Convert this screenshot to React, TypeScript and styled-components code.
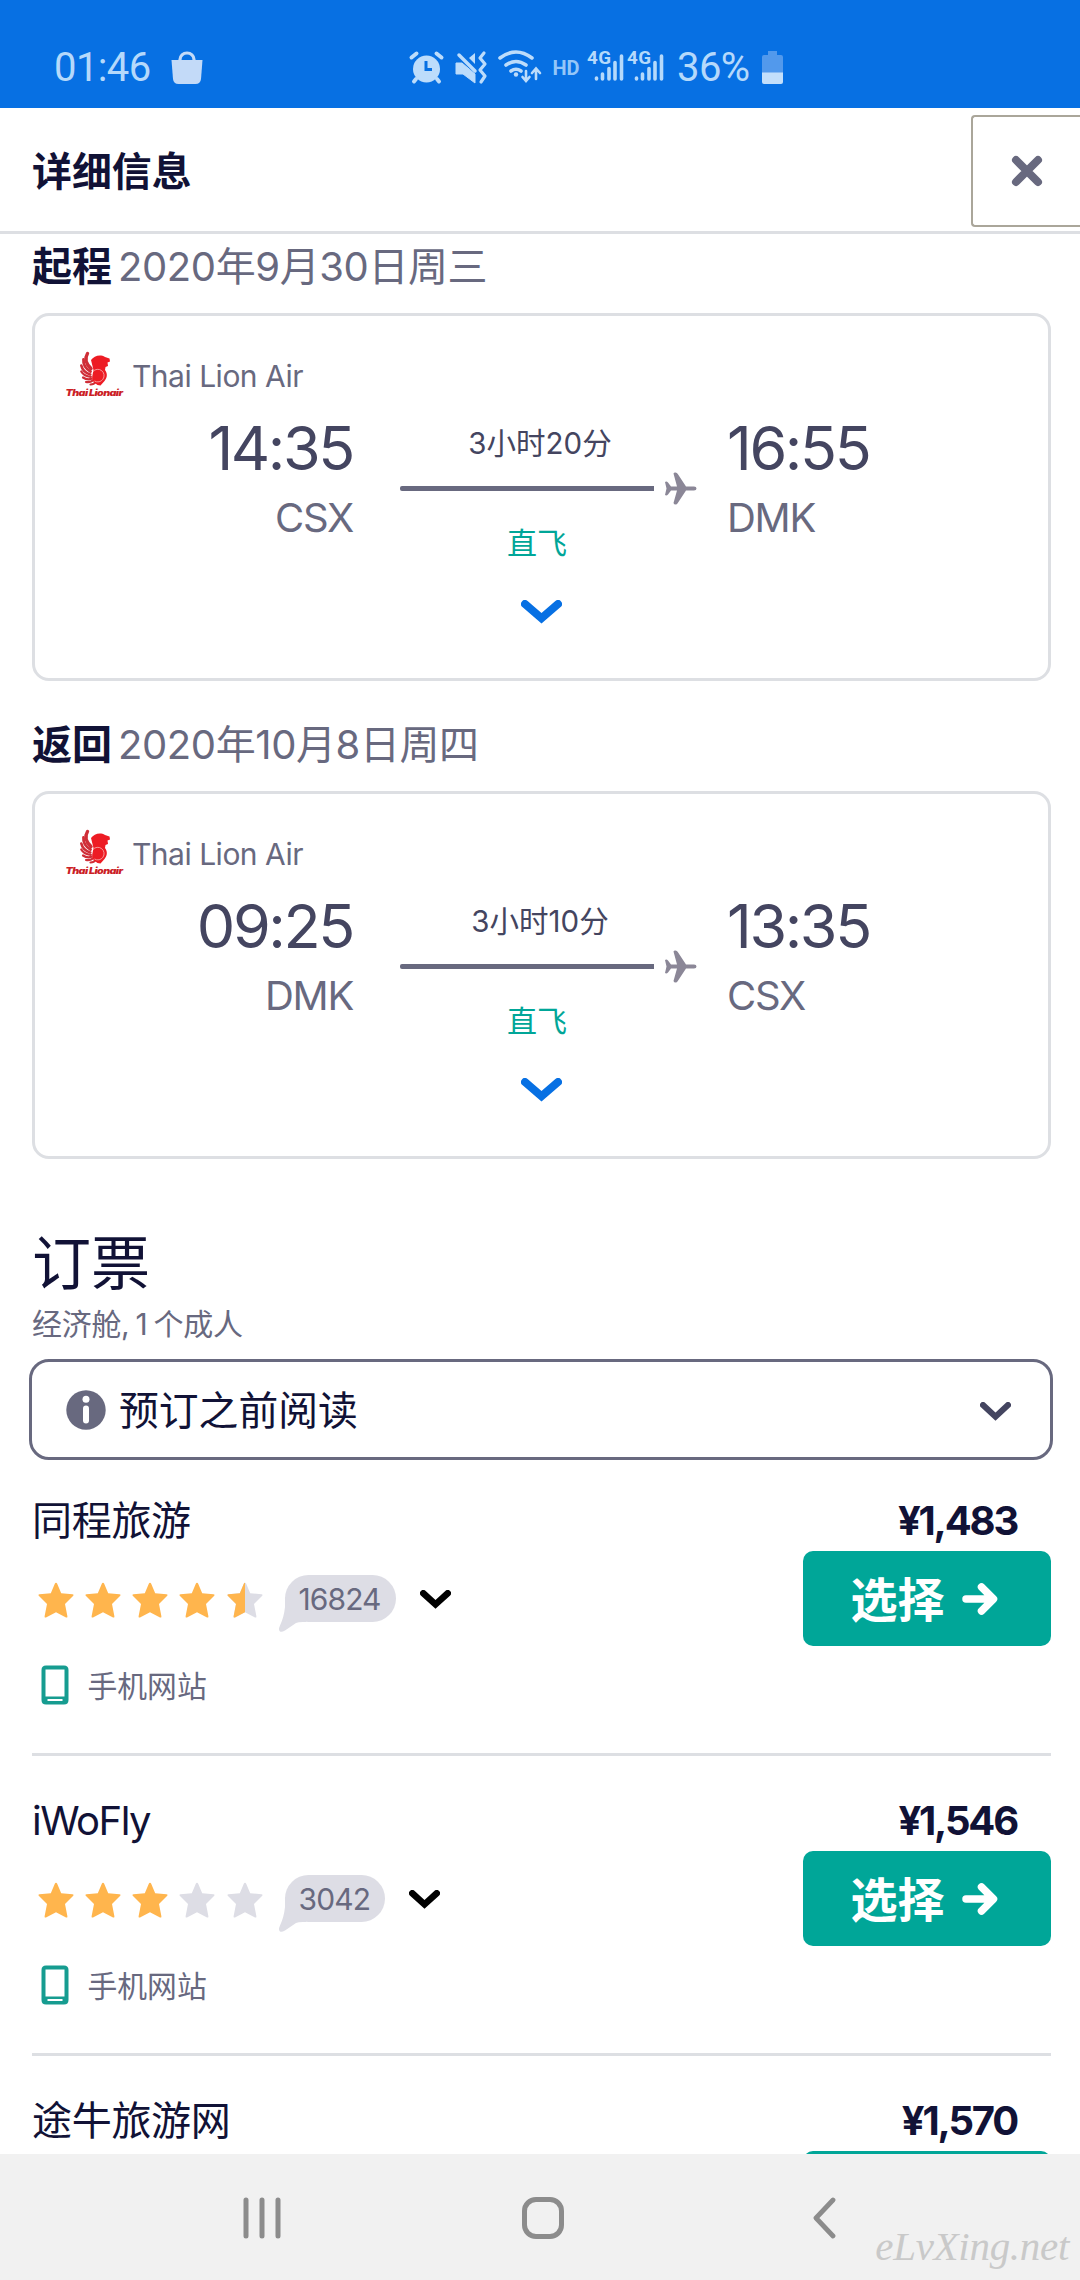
import React from "react";
import styled, { createGlobalStyle } from "styled-components";

const color = {
  blue: "#0770e3",
  ink: "#111236",
  time: "#444560",
  grey: "#68697f",
  line: "#dddfe3",
  teal: "#00a698",
  star: "#ffb54d",
  pale: "#dddde5",
  status: "#b5d9fb",
};

const GlobalStyle = createGlobalStyle`
  * { box-sizing: border-box; }
  body {
    margin: 0;
    background: #fff;
    font-family: Inter, "Noto Sans CJK SC", sans-serif;
    color: ${color.ink};
  }
  svg { display: block; flex: none; }
  button { font: inherit; color: inherit; margin: 0; padding: 0; border: 0; background: none; }
`;

const Screen = styled.div`
  width: 1080px;
  height: 2280px;
  display: flex;
  flex-direction: column;
  overflow: hidden;
  background: #fff;
`;

/* Status bar */
const StatusBar = styled.div`
  flex: none;
  height: 108px;
  padding: 27px 297px 0 54px;
  display: flex;
  align-items: center;
  justify-content: space-between;
  background: ${color.blue};
  color: ${color.status};
  font-family: Roboto, sans-serif;
`;
const StatusGroup = styled.div`
  display: flex;
  align-items: center;
`;
const SignalPair = styled.div`
  display: flex;
  margin: 0 10px 0 -15px;
`;
const StatusText = styled.span<{ $width: number }>`
  width: ${(p) => p.$width}px;
  font-size: 40px;
  line-height: 48px;
  letter-spacing: -0.6px;
  white-space: nowrap;
`;

/* Header */
const Header = styled.header`
  flex: none;
  height: 126px;
  padding-left: 32px;
  display: flex;
  justify-content: space-between;
  align-items: center;
  border-bottom: 3px solid ${color.line};
`;
const Title = styled.h1`
  margin: 4px 0 0;
  font-size: 39.900px;
  line-height: 50px;
  font-weight: 700;
`;
const CloseButton = styled.button`
  width: 109px;
  height: 112px;
  margin-top: 2px;
  padding-left: 38px;
  border: 2px solid #aaa69a;
  border-right: 0;
  border-radius: 4px 0 0 4px;
`;

/* Content */
const Content = styled.main`
  flex: none;
  height: 1920px;
  padding: 0 29px 0 32px;
  overflow: hidden;
`;
const LegHeading = styled.h2<{ $top?: number }>`
  margin: ${(p) => p.$top ?? 0}px 0 17px;
  height: 62px;
  padding-bottom: 3px;
  display: flex;
  align-items: center;
  gap: 6px;
  font-size: 40px;
  font-weight: 700;
  white-space: nowrap;
`;
const LegDate = styled.span`
  font-weight: 380;
  letter-spacing: -0.4px;
  color: ${color.grey};
`;
const Card = styled.section`
  height: 368px;
  padding: 29px 30px 0;
  border: 3px solid ${color.line};
  border-radius: 17px;
  display: flex;
  flex-direction: column;
`;
const Airline = styled.div`
  height: 60px;
  display: flex;
  align-items: center;
  gap: 7px;
  font-size: 30px;
  font-weight: 380;
  letter-spacing: -0.5px;
  color: ${color.grey};
`;
const AirlineName = styled.span`
  padding-top: 2px;
`;
const LegGrid = styled.div`
  display: grid;
  grid-template-columns: 287px 297px 1fr;
  column-gap: 48px;
  height: 195px;
`;
const Stop = styled.div<{ $end?: boolean }>`
  padding-top: 7px;
  margin: ${(p) => (p.$end ? "0 0 0 -18px" : "0 -1px 0 0")};
  text-align: ${(p) => (p.$end ? "left" : "right")};
`;
const Time = styled.div`
  height: 72px;
  font-size: 61px;
  line-height: 72px;
  letter-spacing: -2.4px;
  color: ${color.time};
`;
const Airport = styled.div`
  margin-top: 9px;
  font-size: 40px;
  line-height: 50px;
  font-weight: 400;
  letter-spacing: -1.3px;
  color: ${color.grey};
`;
const Route = styled.div`
  padding-top: 18px;
`;
const Duration = styled.div`
  width: 280px;
  font-size: 29.5px;
  line-height: 40px;
  text-align: center;
  color: ${color.time};
`;
const Track = styled.div`
  height: 33px;
  margin-top: 9px;
  display: flex;
  align-items: center;
  gap: 11px;
`;
const TrackLine = styled.div`
  width: 255px;
  height: 5px;
  border-radius: 2px 0 0 2px;
  background: ${color.grey};
`;
const Direct = styled.div`
  width: 274px;
  margin-top: 18px;
  font-size: 30px;
  line-height: 40px;
  text-align: center;
  color: ${color.teal};
`;
const Expand = styled.button`
  align-self: center;
`;

const BookTitle = styled.h2`
  margin: 65px 0 0;
  font-size: 59px;
  line-height: 80px;
  font-weight: 400;
`;
const BookSub = styled.p`
  margin: 0 0 15px;
  font-size: 30px;
  line-height: 40px;
  letter-spacing: -0.3px;
  word-spacing: -2px;
  font-weight: 380;
  color: ${color.grey};
`;
const Notice = styled.button`
  width: 1024px;
  height: 101px;
  margin: 0 -3px -4px;
  padding: 0 39px 0 34px;
  border: 3px solid ${color.grey};
  border-radius: 20px;
  display: flex;
  align-items: center;
`;
const NoticeText = styled.span`
  flex: 1;
  padding: 2px 0 0 13px;
  text-align: left;
  font-size: 39.800px;
  line-height: 56px;
`;
const NoticeToggle = styled.span`
  padding-top: 4px;
`;

/* Agents */
const Agent = styled.article`
  height: 300px;
  padding-top: 40px;
  border-bottom: 3px solid ${color.line};
  display: flex;
  justify-content: space-between;
`;
const AgentName = styled.h3<{ $latin?: boolean }>`
  margin: 0;
  padding-top: 1px;
  font-size: 40px;
  line-height: 48px;
  font-weight: 400;
  letter-spacing: ${(p) => (p.$latin ? -1.5 : -0.3)}px;
`;
const Rating = styled.div`
  height: 60px;
  margin-top: 23px;
  padding-left: 5.500px;
  display: flex;
  align-items: center;
`;
const Stars = styled.div`
  display: flex;
  gap: 11.250px;
  padding-top: 3px;
`;
const Bubble = styled.div`
  position: relative;
  height: 47px;
  margin: 0 24px 0 22px;
  padding: 0 15px 0 14px;
  border-radius: 24px;
  background: ${color.pale};
  font-size: 30px;
  line-height: 48px;
  letter-spacing: -0.9px;
  color: ${color.grey};
`;
const BubbleTail = styled.svg`
  position: absolute;
  left: -6px;
  top: 22px;
`;
const ReviewCount = styled.span`
  position: relative;
`;
const RatingToggle = styled.span`
  padding-top: 3px;
`;
const Site = styled.div`
  height: 48px;
  margin-top: 32px;
  padding-left: 9px;
  display: flex;
  align-items: center;
  gap: 18.500px;
  font-size: 29.800px;
  font-weight: 380;
  color: ${color.grey};
`;
const SiteIcon = styled.span`
  padding-top: 2px;
`;
const Offer = styled.div`
  width: 248px;
`;
const Price = styled.div`
  padding-right: 34px;
  font-size: 40px;
  line-height: 49px;
  font-weight: 700;
  letter-spacing: -2.200px;
  text-align: right;
`;
const Select = styled.button`
  width: 248px;
  height: 95px;
  margin-top: 6px;
  padding-right: 6px;
  border-radius: 10px;
  display: flex;
  justify-content: center;
  align-items: center;
  gap: 17px;
  background: ${color.teal};
  color: #fff;
  font-size: 47px;
  font-weight: 700;
`;
const SelectLabel = styled.span`
  padding-bottom: 4px;
`;

/* Navigation bar */
const NavBar = styled.nav`
  position: relative;
  flex: 1;
  padding: 2px 0 0 243px;
  display: flex;
  align-items: center;
  background: #f1f1f1;
`;
const NavButton = styled.button<{ $gap?: number }>`
  margin-left: ${(p) => p.$gap ?? 0}px;
`;
const Watermark = styled.span`
  position: absolute;
  right: 11px;
  bottom: 11px;
  font-family: "Liberation Serif", serif;
  font-style: italic;
  font-size: 41px;
  line-height: 46px;
  letter-spacing: -0.3px;
  color: #c9c9c9;
`;

const Chevron = ({ w, h, stroke, sw }: { w: number; h: number; stroke: string; sw: number }) => (
  <svg width={w} height={h} viewBox={`0 0 ${w} ${h}`} fill="none">
    <path
      d={`M${sw / 2} ${sw / 2} L${w / 2} ${h - sw * 0.72} L${w - sw / 2} ${sw / 2}`}
      stroke={stroke}
      strokeWidth={sw}
      strokeLinecap="round"
    />
  </svg>
);

const BagIcon = () => (
  <svg width="32" height="34" viewBox="0 0 32 34">
    <path d="M9 10V8.500a7 6.500 0 0 1 14 0V10" fill="none" stroke="#c3daf8" strokeWidth="3.200" />
    <path d="M.5 9h31L30 28q-.6 5-5.500 5h-17Q2.600 33 2 28Z" fill="#c3daf8" />
  </svg>
);

const StatusIcons = () => (
  <svg width="194" height="36" viewBox="408 48 194 36" fill="none" stroke="#bcdcfb">
    <g>
      <circle cx="426.500" cy="67" r="13.500" fill="#bcdcfb" stroke="none" />
      <path d="M411.500 55.500l5-4M441.500 55.500l-5-4" strokeWidth="4" strokeLinecap="round" />
      <path d="M416 77l-2 2.500M437 77l2 2.500" strokeWidth="4" strokeLinecap="round" />
      <path d="M426 59v8.500h6" stroke={color.blue} strokeWidth="3" />
    </g>
    <g>
      <path d="M456 61h6l13 11v9l-12-9h-7Z" fill="#bcdcfb" stroke="#bcdcfb" strokeWidth="1" />
      <path d="M459 53l16 16" strokeWidth="3.500" strokeLinecap="round" />
      <path d="M469 56l6-5v11Z" fill="#bcdcfb" stroke="none" />
      <path d="M484 51l-4 5 5 6-5 6 5 6-4 6" strokeWidth="3.200" strokeLinecap="round" strokeLinejoin="round" />
    </g>
    <g strokeWidth="3.600" strokeLinecap="round">
      <path d="M500 56q16-12 32 0M506 63q10-7 20 0M511 69q5-3.500 10 0" />
      <circle cx="516" cy="72.500" r="2.200" fill="#bcdcfb" stroke="none" />
      <path d="M526 69v9M522.500 75l3.500 4 3.500-4M536 77v-10M532 71l4-4.500 4 4.500" strokeWidth="2.600" />
    </g>
    <text x="552.500" y="72.500" fontFamily="Roboto" fontSize="20" fontWeight="700" fill="#94c6f8" stroke="none" textLength="27">HD</text>
  </svg>
);

const Signal = () => (
  <svg width="40" height="52" viewBox="0 -8 40 52">
    <text x="0" y="14.200" fontFamily="Roboto" fontSize="18.800" fontWeight="700" fill={color.status} textLength="24">4G</text>
    <g stroke={color.status} strokeWidth="3.600" strokeLinecap="round">
      <path d="M9.500 28v1M15.500 24v5M22 18.500v10.500M28 12.500v16.500M34.500 6v23" />
    </g>
  </svg>
);

const BatteryIcon = () => (
  <svg width="21" height="33" viewBox="0 0 21 33">
    <path d="M6 0h9v4h4q2 0 2 2v16H0V6q0-2 2-2h4Z" fill="#5299ec" />
    <path d="M0 21.500h21V31q0 2-2 2H2q-2 0-2-2Z" fill="#c3dffb" />
  </svg>
);

const CloseIcon = () => (
  <svg width="32" height="32" viewBox="0 0 32 32">
    <path d="M5 5l22 22M27 5L5 27" stroke={color.grey} strokeWidth="8" strokeLinecap="round" />
  </svg>
);

const LionLogo = () => (
  <svg width="60" height="48" viewBox="0 0 60 48">
    <g fill="none" stroke="#cf2e37" strokeLinecap="round">
      <path d="M22.500 2.500c-3 5-2 10 3.500 15" strokeWidth="3.400" />
      <path d="M18.500 8.500c-.5 5 2 9 7 12" strokeWidth="2.800" />
      <path d="M16.300 14.500c1 4.500 4 7.500 9 9" strokeWidth="2.600" />
      <path d="M16.300 20.500c2 3.500 5 5 9.500 5.300" strokeWidth="2.300" />
      <path d="M18 26.500c3 2 5.500 2.300 8.500 1.300" strokeWidth="2.200" />
      <path d="M21 31c3 .6 5 0 7-1.600" strokeWidth="2.200" />
      <path d="M25.500 33.500c2.500 0 4-.8 5-2.500" strokeWidth="2.200" />
    </g>
    <path d="M26 9c3-4 9-6 14-3l4.500 1.500.5 3-2.500 1 .5 3.500-2.500 1-.5 3c3 4 2 8-.5 11l-4 4.500-3-.5c-5-3-6-6-5-10l1-5Z" fill="#ed1c24" />
    <path d="M28 20.500a6.300 6.300 0 1 1 1.500 9.500" fill="none" stroke="#f8b4b4" strokeWidth="0.800" />
    <text x="0.500" y="44.500" fontFamily="Inter" fontWeight="900" fontStyle="italic" fontSize="9" fill="#cb2026" textLength="57" lengthAdjust="spacingAndGlyphs">
      Thai Lionair
    </text>
  </svg>
);

const PlaneIcon = () => (
  <svg width="32" height="33" viewBox="0 0 32 33">
    <path
      d="M8.500 1.500Q9 .3 10.500.5q1.500.2 2.300 1.500L21 14.500h8q2.500 0 2.500 2t-2.500 2h-8L12.800 31q-.8 1.500-2.300 1.500T8.500 31L12 18.500H6L3 22.500q-1.500 1.500-3 .5l1.500-6.500L0 10q1.500-1 3 .5l3 4h6Z"
      fill="#8b8797"
    />
  </svg>
);

const InfoIcon = () => (
  <svg width="40" height="40" viewBox="0 0 40 40">
    <circle cx="20" cy="20" r="19.700" fill={color.grey} />
    <circle cx="20" cy="9.300" r="3.500" fill="#fff" />
    <rect x="17" y="15.500" width="6" height="18" rx="3" fill="#fff" />
  </svg>
);

const starPath =
  "M18 .8q.8 0 1.200 1l4 9.400 11.300 1q1.800.4.500 1.900l-8 7.800 2.400 12.300q.1 1.800-1.400 1.300L18 30.200 8 35.500q-1.500.5-1.400-1.300L9 21.900 1 14.100q-1.300-1.500.5-1.900l11.300-1 4-9.400q.4-1 1.200-1Z";
const halfStarPath =
  "M18 .8V30.200L8 35.500q-1.500.5-1.400-1.300L9 21.900 1 14.100q-1.300-1.500.5-1.900l11.300-1 4-9.400q.4-1 1.200-1Z";
const Star = ({ fill }: { fill: number }) => (
  <svg width="36" height="36" viewBox="0 0 36 36">
    <path d={starPath} fill={fill === 1 ? color.star : color.pale} />
    {fill === 0.5 && <path d={halfStarPath} fill={color.star} />}
  </svg>
);

const PhoneIcon = () => (
  <svg width="28" height="40" viewBox="0 0 28 40">
    <path
      fillRule="evenodd"
      d="M5 .5h18q4.500 0 4.500 4.500v30q0 4.500-4.500 4.500H5Q.5 39.500.5 35V5Q.5.500 5 .5ZM4.500 4.500V31.500h19v-27ZM6.500 34v2h15v-2Z"
      fill="#169c90"
    />
  </svg>
);

const ArrowIcon = () => (
  <svg width="36" height="34" viewBox="0 0 36 34" fill="none">
    <path d="M4 17h26M19.500 5L31.500 17 19.500 29" stroke="#fff" strokeWidth="7.500" strokeLinecap="round" strokeLinejoin="round" />
  </svg>
);

type Leg = { label: string; date: string; dep: string; from: string; arr: string; to: string; duration: string };
const legs: Leg[] = [
  { label: "起程", date: "2020年9月30日周三", dep: "14:35", from: "CSX", arr: "16:55", to: "DMK", duration: "3小时20分" },
  { label: "返回", date: "2020年10月8日周四", dep: "09:25", from: "DMK", arr: "13:35", to: "CSX", duration: "3小时10分" },
];

type AgentData = { name: string; latin?: boolean; price: string; rating?: number; reviews?: string };
const agents: AgentData[] = [
  { name: "同程旅游", rating: 4.5, reviews: "16824", price: "¥1,483" },
  { name: "iWoFly", latin: true, rating: 3, reviews: "3042", price: "¥1,546" },
  { name: "途牛旅游网", price: "¥1,570" },
];

export default function App() {
  return (
    <Screen>
      <GlobalStyle />
      <StatusBar>
        <StatusGroup>
          <StatusText $width={117}>01:46</StatusText>
          <BagIcon />
        </StatusGroup>
        <StatusGroup>
          <StatusIcons />
          <SignalPair>
            <Signal />
            <Signal />
          </SignalPair>
          <StatusText $width={85}>36%</StatusText>
          <BatteryIcon />
        </StatusGroup>
      </StatusBar>
      <Header>
        <Title>详细信息</Title>
        <CloseButton>
          <CloseIcon />
        </CloseButton>
      </Header>
      <Content>
        {legs.map((leg, i) => (
          <React.Fragment key={leg.label}>
            <LegHeading $top={i ? 31 : 0}>
              {leg.label}
              <LegDate>{leg.date}</LegDate>
            </LegHeading>
            <Card>
              <Airline>
                <LionLogo />
                <AirlineName>Thai Lion Air</AirlineName>
              </Airline>
              <LegGrid>
                <Stop>
                  <Time>{leg.dep}</Time>
                  <Airport>{leg.from}</Airport>
                </Stop>
                <Route>
                  <Duration>{leg.duration}</Duration>
                  <Track>
                    <TrackLine />
                    <PlaneIcon />
                  </Track>
                  <Direct>直飞</Direct>
                </Route>
                <Stop $end>
                  <Time>{leg.arr}</Time>
                  <Airport>{leg.to}</Airport>
                </Stop>
              </LegGrid>
              <Expand>
                <Chevron w={41} h={24} stroke={color.blue} sw={8} />
              </Expand>
            </Card>
          </React.Fragment>
        ))}
        <BookTitle>订票</BookTitle>
        <BookSub>经济舱, 1 个成人</BookSub>
        <Notice>
          <InfoIcon />
          <NoticeText>预订之前阅读</NoticeText>
          <NoticeToggle>
            <Chevron w={31} h={19} stroke={color.time} sw={6} />
          </NoticeToggle>
        </Notice>
        {agents.map(({ name, latin, price, rating, reviews }) => (
          <Agent key={name}>
            <div>
              <AgentName $latin={latin}>{name}</AgentName>
              {rating !== undefined && (
                <>
                  <Rating>
                    <Stars>
                      {[0, 1, 2, 3, 4].map((n) => (
                        <Star key={n} fill={Math.max(0, Math.min(1, rating - n))} />
                      ))}
                    </Stars>
                    <Bubble>
                      <BubbleTail width="30" height="36" viewBox="0 0 30 36">
                        <path d="M6 0v10Q5 20 1 28.500q-2 4.500 0 6 1.500 1 5-1L17 26q3-1.500 10-1V0Z" fill={color.pale} />
                      </BubbleTail>
                      <ReviewCount>{reviews}</ReviewCount>
                    </Bubble>
                    <RatingToggle>
                      <Chevron w={31} h={19} stroke="#000" sw={6.5} />
                    </RatingToggle>
                  </Rating>
                  <Site>
                    <SiteIcon>
                      <PhoneIcon />
                    </SiteIcon>
                    手机网站
                  </Site>
                </>
              )}
            </div>
            <Offer>
              <Price>{price}</Price>
              <Select>
                {rating !== undefined && (
                  <>
                    <SelectLabel>选择</SelectLabel>
                    <ArrowIcon />
                  </>
                )}
              </Select>
            </Offer>
          </Agent>
        ))}
      </Content>
      <NavBar>
        <NavButton>
          <svg width="38" height="42" viewBox="0 0 38 42">
            <path d="M3 3v36M19 3v36M35 3v36" stroke="#8c8c8c" strokeWidth="5" strokeLinecap="round" />
          </svg>
        </NavButton>
        <NavButton $gap={241}>
          <svg width="42" height="42" viewBox="0 0 42 42">
            <rect x="2.500" y="2.500" width="37" height="37" rx="11.500" fill="none" stroke="#8c8c8c" strokeWidth="5" />
          </svg>
        </NavButton>
        <NavButton $gap={248}>
          <svg width="24" height="42" viewBox="0 0 24 42">
            <path d="M21 3L4 21l17 18" fill="none" stroke="#8c8c8c" strokeWidth="4.800" strokeLinecap="round" strokeLinejoin="round" />
          </svg>
        </NavButton>
        <Watermark>eLvXing.net</Watermark>
      </NavBar>
    </Screen>
  );
}
